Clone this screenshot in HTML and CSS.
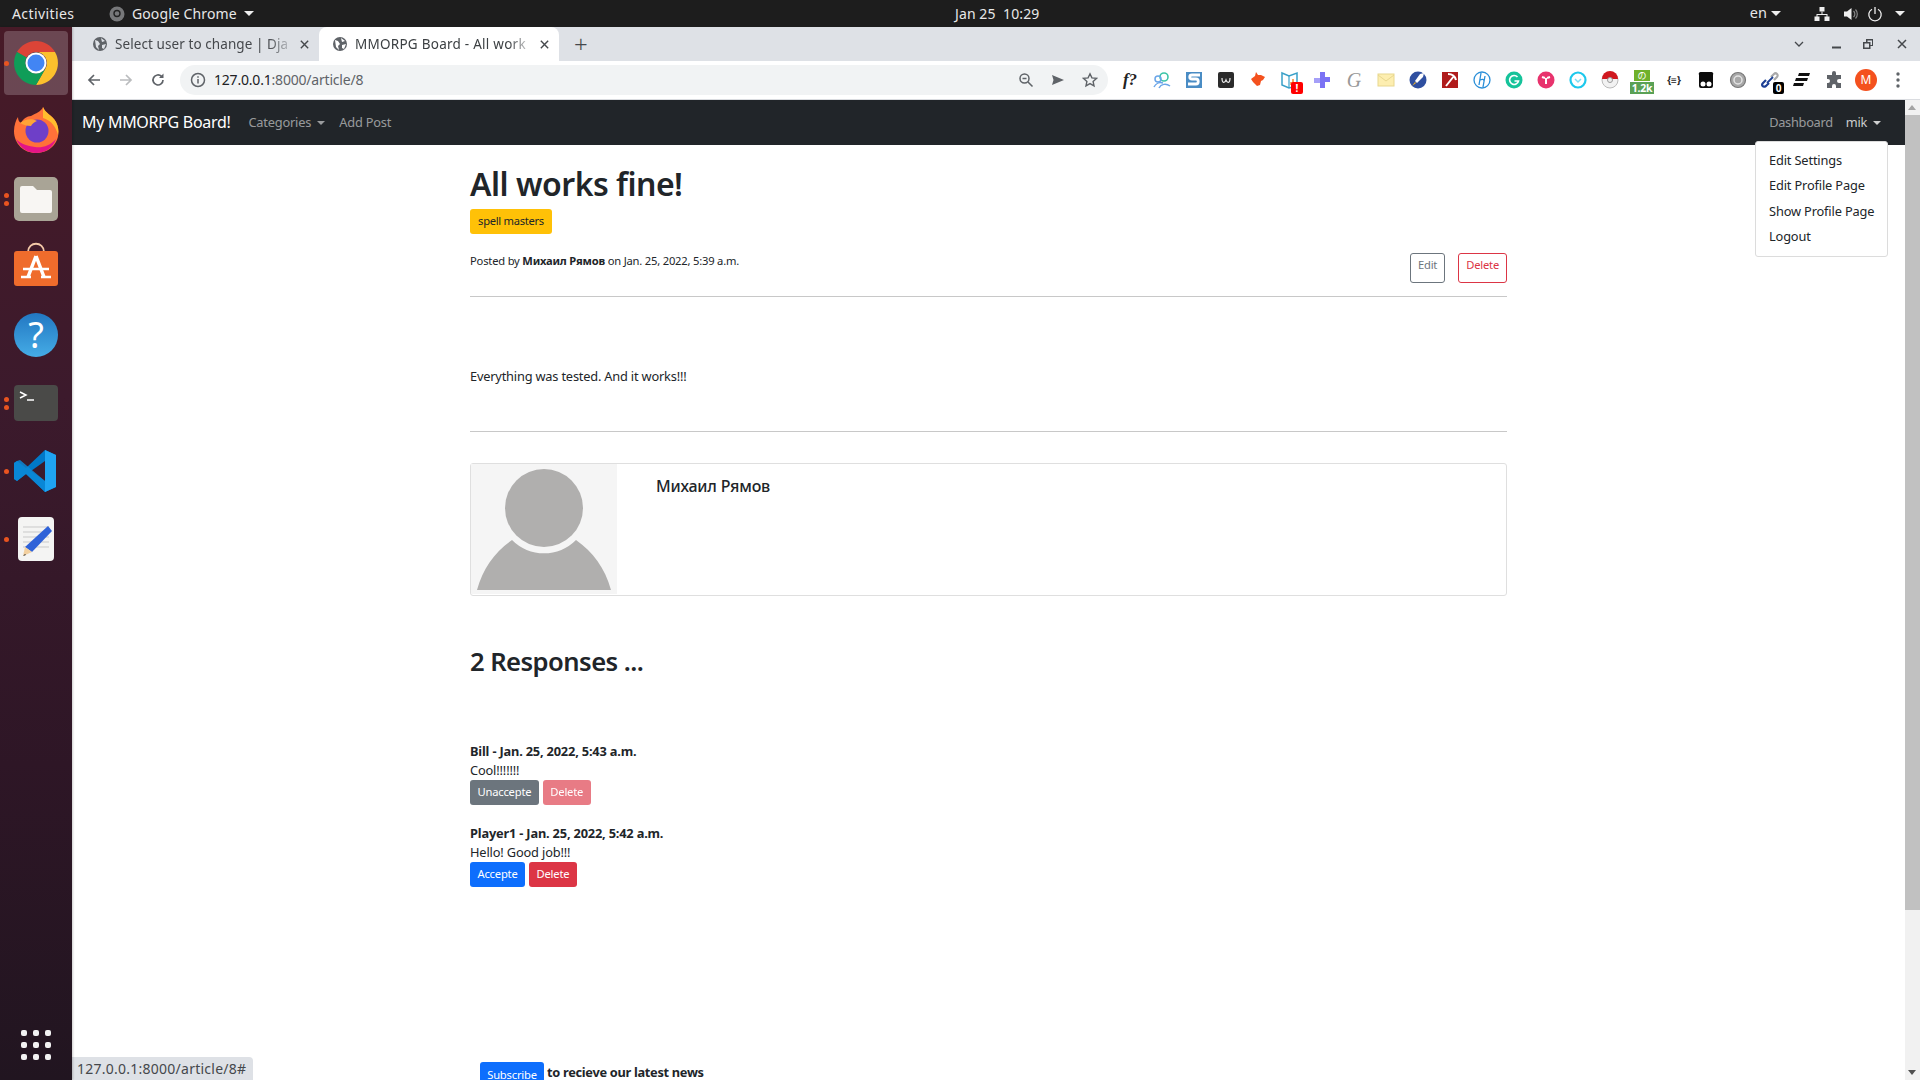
FILE: index.html
```html
<!DOCTYPE html>
<html lang="en">
<head>
  <meta charset="UTF-8">
  <meta name="viewport" content="width=device-width, initial-scale=1">
  <title>MMORPG Board - All works fine!</title>
  <link rel="stylesheet" href="styles.css">
</head>
<body>
  <header class="topbar">
    <span class="activities">Activities</span>
    <div class="app-menu">
      <svg class="app-menu-icon" viewBox="0 0 16 16"><circle cx="8" cy="8" r="7.5" fill="#77787a"/><circle cx="8" cy="7.5" r="3" fill="none" stroke="#222" stroke-width="1.4"/></svg>
      <span>Google Chrome</span>
      <i class="tri"></i>
    </div>
    <div class="clock">Jan 25&nbsp;&nbsp;10:29</div>
    <div class="tray">
      <span class="lang">en</span><i class="tri"></i>
      <svg class="tray-net" viewBox="0 0 16 16" fill="#eee"><rect x="5.5" y="1" width="5" height="4.5"/><rect x="0.5" y="10.5" width="5" height="4.5"/><rect x="10.5" y="10.5" width="5" height="4.5"/><path d="M7.5 5.5h1V8h5v3h-1V9h-9v2h-1V8h5z"/></svg>
      <svg class="tray-vol" viewBox="0 0 16 16"><path d="M1 5.5h3L8.5 2v12L4 10.5H1z" fill="#eee"/><path d="M10.5 5a4 4 0 0 1 0 6M12.5 3.5a6.5 6.5 0 0 1 0 9" fill="none" stroke="#888" stroke-width="1.2"/></svg>
      <svg class="tray-pow" viewBox="0 0 16 16" fill="none" stroke="#eee" stroke-width="1.3"><path d="M5 3.2a6.2 6.2 0 1 0 6 0M8 1v7"/></svg>
      <i class="tri"></i>
    </div>
  </header>

  <div class="desktop">
    <nav class="dock">
      <div class="dock-item active"><i class="run run-one"></i>
        <svg viewBox="0 0 48 48"><path d="M5 13a22 22 0 0 1 38 0H24a11 11 0 0 0-9.5 5.5z" fill="#db4437"/><path d="M43 13a22 22 0 0 1-19 33l9.5-16.5A11 11 0 0 0 24 13z" fill="#fbc02d"/><path d="M5 13a22 22 0 0 0 19 33l9.5-16.5a11 11 0 0 1-19-11z" fill="#0f9d58"/><circle cx="24" cy="24" r="10.5" fill="#fff"/><circle cx="24" cy="24" r="8.5" fill="#4285f4"/></svg>
      </div>
      <div class="dock-item dock-firefox">
        <svg viewBox="0 0 48 48"><path d="M31 1c2 6 9 8 13 15 4 8 3 17-2 23-5 6-12 8-18 8C12 47 2 38 2 25c0-6 2-11 4-14 0 3 1 5 3 6 2-4 6-7 10-7 5-3 10-4 12-9z" fill="#ff7139"/><path d="M4 33c4 9 12 14 20 14 9 0 17-5 20-14-6 7-14 9-21 8-8-1-14-3-19-8z" fill="#e31587"/><path d="M31 1c2 6 9 8 13 15 2 4 3 8 2 13-2-8-6-14-15-17z" fill="#ffbd2e"/><circle cx="25" cy="25" r="11.5" fill="#6e3fc8"/><path d="M8 17c5-4 12-5 17-2-3 1-5 3-6 5-4 0-8-1-11-3z" fill="#ffa436"/></svg>
      </div>
      <div class="dock-item"><i class="run run-two"></i>
        <svg viewBox="0 0 48 48"><rect x="2" y="2" width="44" height="44" rx="5" fill="#a9a496"/><path d="M8 13a2 2 0 0 1 2-2h11l4 4h13a2 2 0 0 1 2 2v19a2 2 0 0 1-2 2H10a2 2 0 0 1-2-2z" fill="#f8f6f3"/></svg>
      </div>
      <div class="dock-item dock-store">
        <svg viewBox="0 0 48 48"><path d="M16 12c0-11 16-11 16 0" fill="none" stroke="#f4c9a8" stroke-width="1.8"/><rect x="2" y="11" width="44" height="35" rx="3" fill="#ef6c2c"/><path d="M24 16L16 37M24 16l8 21" stroke="#fff" stroke-width="3.5" fill="none"/><path d="M11 29h26M9 37h10M29 37h10" stroke="#fff" stroke-width="2.5" fill="none"/></svg>
      </div>
      <div class="dock-item">
        <svg viewBox="0 0 48 48"><defs><linearGradient id="helpGrad" x1="0" y1="0" x2="0" y2="1"><stop offset="0" stop-color="#2277c2"/><stop offset="1" stop-color="#45ace6"/></linearGradient></defs><circle cx="24" cy="24" r="22" fill="url(#helpGrad)"/><text x="24" y="37" text-anchor="middle" class="help-mark">?</text></svg>
      </div>
      <div class="dock-item"><i class="run run-two"></i>
        <svg viewBox="0 0 48 48"><rect x="2" y="6" width="44" height="36" rx="4" fill="#4a4a48"/><path d="M8 13l6 3-6 3" fill="none" stroke="#fff" stroke-width="1.5"/><path d="M15 21h7" stroke="#fff" stroke-width="1.5"/></svg>
      </div>
      <div class="dock-item"><i class="run run-one"></i>
        <svg viewBox="0 0 48 48"><path d="M33 3l11 5v32l-11 5-19-18-9 7-3-2V16l3-2 9 7z" fill="#0078c8"/><path d="M33 3l11 5v32l-11 5z" fill="#1fa4f2"/><path d="M33 14L19 24l14 10z" fill="#3c1a2b"/><path d="M5 14l3-1 25 21v11L14 27l-9 7-3-2V16z" fill="#0a8ad8" opacity=".85"/></svg>
      </div>
      <div class="dock-item"><i class="run run-one"></i>
        <svg viewBox="0 0 48 48"><rect x="6" y="2" width="36" height="44" rx="4" fill="#f4f4f3"/><path d="M11 12h26M11 17h26M11 22h26M11 27h26M11 32h26" stroke="#c9c9c9"/><path d="M36 11l4 5-20 21-7-5z" fill="#2f62d8"/><path d="M13 32l7 5-9 4z" fill="#f2d0a0"/><path d="M11 41l2-2 1 1z" fill="#333"/></svg>
      </div>
      <div class="dock-apps">
        <i></i><i></i><i></i><i></i><i></i><i></i><i></i><i></i><i></i>
      </div>
    </nav>

    <div class="browser">
      <div class="tabstrip">
        <div class="tab">
          <svg class="globe" viewBox="0 0 16 16"><circle cx="8" cy="8" r="7" fill="#5f6368"/><path d="M3 4l3 1 2 3-2 2 1 4-3-3zM9 2l4 3-3 1zM10 9l4-1-2 5-2-1z" fill="#dee1e6"/></svg>
          <span class="tab-title">Select user to change | Dja</span>
          <svg class="tab-close" viewBox="0 0 12 12"><path d="M2 2l8 8M10 2l-8 8" stroke="#45484c" stroke-width="1.5"/></svg>
        </div>
        <div class="tab tab-active">
          <svg class="globe" viewBox="0 0 16 16"><circle cx="8" cy="8" r="7" fill="#5f6368"/><path d="M3 4l3 1 2 3-2 2 1 4-3-3zM9 2l4 3-3 1zM10 9l4-1-2 5-2-1z" fill="#fff"/></svg>
          <span class="tab-title">MMORPG Board - All work</span>
          <svg class="tab-close" viewBox="0 0 12 12"><path d="M2 2l8 8M10 2l-8 8" stroke="#45484c" stroke-width="1.5"/></svg>
        </div>
        <span class="tab-new">+</span>
        <div class="win-controls">
          <svg viewBox="0 0 12 12" class="win-chevron"><path d="M2 4l4 4 4-4" fill="none" stroke="#45484c" stroke-width="1.3"/></svg>
          <svg viewBox="0 0 12 12" class="win-min"><path d="M1 9.5h9" stroke="#45484c" stroke-width="2"/></svg>
          <svg viewBox="0 0 12 12" class="win-max"><path d="M4 1h7v7H8.5v3H1V4h3zM5.5 2.5V4h3v3H10V2.5zM2.5 5.5v4H7v-4z" fill="#45484c"/></svg>
          <svg viewBox="0 0 12 12" class="win-close"><path d="M2 2l8 8M10 2l-8 8" stroke="#45484c" stroke-width="1.5"/></svg>
        </div>
      </div>

      <div class="toolbar">
        <div class="tb-nav">
          <svg viewBox="0 0 16 16"><path d="M14 8H3M8 3L3 8l5 5" fill="none" stroke="#5f6368" stroke-width="1.7"/></svg>
          <svg viewBox="0 0 16 16"><path d="M2 8h11M8 3l5 5-5 5" fill="none" stroke="#babcbe" stroke-width="1.7"/></svg>
          <svg viewBox="0 0 16 16"><path d="M13 8a5 5 0 1 1-1.5-3.6" fill="none" stroke="#5f6368" stroke-width="1.7"/><path d="M13.5 1.5V6H9z" fill="#5f6368"/></svg>
        </div>
        <div class="omnibox">
          <svg class="omni-info" viewBox="0 0 16 16"><circle cx="8" cy="8" r="6.5" fill="none" stroke="#5f6368" stroke-width="1.5"/><path d="M8 7v4.5M8 4.3v1.5" stroke="#5f6368" stroke-width="1.5"/></svg>
          <span class="url"><b>127.0.0.1</b>:8000/article/8</span>
          <div class="omni-actions">
            <svg viewBox="0 0 16 16"><circle cx="6.5" cy="6.5" r="4.5" fill="none" stroke="#5f6368" stroke-width="1.5"/><path d="M10 10l4.5 4.5M4.5 6.5h4" stroke="#5f6368" stroke-width="1.5"/></svg>
            <svg viewBox="0 0 16 16"><path d="M2 3l12 5-12 5 1.5-5z" fill="#5f6368"/></svg>
            <svg viewBox="0 0 16 16"><path d="M8 1.8l1.9 4.1 4.5.5-3.3 3 .9 4.4L8 11.600l-4 2.200.9-4.400-3.300-3 4.500-.5z" fill="none" stroke="#5f6368" stroke-width="1.4"/></svg>
          </div>
        </div>
        <div class="extensions">
          <span class="ext ext-formula">f?</span>
          <span class="ext"><svg viewBox="0 0 20 20"><circle cx="12" cy="7" r="4" fill="none" stroke="#3cc4a8" stroke-width="1.6"/><circle cx="6" cy="9" r="3" fill="none" stroke="#6aa5e8" stroke-width="1.5"/><path d="M2 17c2-4 6-5 9-4M7 18c2-4 7-5 11-2" fill="none" stroke="#6aa5e8" stroke-width="1.5"/></svg></span>
          <span class="ext"><svg viewBox="0 0 20 20"><rect x="2" y="2" width="16" height="16" fill="#4a8cc4"/><path d="M16 5H8c-3 0-3 4 0 4h4c3 0 3 5 0 5H4" fill="none" stroke="#fff" stroke-width="2.8"/></svg></span>
          <span class="ext"><svg viewBox="0 0 20 20"><rect x="2" y="2" width="16" height="16" rx="2" fill="#2b2b2b"/><path d="M6 8c0 6 3 5 4 2 1 3 4 4 4-2" fill="none" stroke="#eee" stroke-width="1.2"/></svg></span>
          <span class="ext"><svg viewBox="0 0 20 20"><path d="M3 9l4-3 1-4 2 3h3l4 2-2 3-2 1-1 4-3 1-2-2-2-2z" fill="#f4511e"/></svg></span>
          <span class="ext"><svg viewBox="0 0 20 20"><path d="M2 3l7 3 8-3v13l-8 2-7-3z" fill="none" stroke="#3aa0c8" stroke-width="1.5"/><path d="M9 6v12" stroke="#3aa0c8" stroke-width="1.2"/><path d="M11 15v-3M13 15V9" stroke="#ef8a2c" stroke-width="1.5"/></svg><b class="badge-red">!</b></span>
          <span class="ext"><svg viewBox="0 0 20 20"><path d="M8 2h5v5h5v5h-5v6H8v-6H2V8h6z" fill="#7b72f4"/><rect x="2" y="8" width="6" height="5" fill="#a59ff8"/></svg></span>
          <span class="ext ext-g">G</span>
          <span class="ext"><svg viewBox="0 0 20 20"><rect x="2" y="4" width="16" height="12" fill="#fdeeb0" stroke="#e8d78e"/><path d="M2 5l8 6 8-6" fill="none" stroke="#e8d78e"/></svg></span>
          <span class="ext"><svg viewBox="0 0 20 20"><circle cx="10" cy="10" r="8.5" fill="#2f4fa0"/><path d="M7 11l5-7 4-1-1 4-6 6z" fill="#fff"/><path d="M4 16l3-4 1 1z" fill="#f5b324"/></svg></span>
          <span class="ext"><svg viewBox="0 0 20 20"><rect x="2" y="2" width="16" height="16" fill="#b01c1c"/><path d="M6 16L14 6M8 4c4 0 7 2 8 6" fill="none" stroke="#fff" stroke-width="2"/></svg></span>
          <span class="ext"><svg viewBox="0 0 20 20"><circle cx="10" cy="10" r="8" fill="#fff" stroke="#2a8fd8" stroke-width="1.3"/><path d="M9 3L7 15M13 6l-2 11M8 10c2-1 4-1 4 1" fill="none" stroke="#2a8fd8" stroke-width="1.3"/></svg></span>
          <span class="ext"><svg viewBox="0 0 20 20"><circle cx="10" cy="10" r="8.5" fill="#15c39a"/><path d="M13.5 7a4.5 4.5 0 1 0 1 4h-4" fill="none" stroke="#fff" stroke-width="1.6"/></svg></span>
          <span class="ext"><svg viewBox="0 0 20 20"><circle cx="10" cy="10" r="8.5" fill="#e8336d"/><path d="M6 7l3 1M14 7l-3 1M10 8v6" stroke="#fff" stroke-width="2"/></svg></span>
          <span class="ext"><svg viewBox="0 0 20 20"><circle cx="10" cy="10" r="7.5" fill="#fff" stroke="#1dc8ec" stroke-width="2.2"/><path d="M7 9l3 3 3-3" fill="none" stroke="#7ddcf2" stroke-width="1.5"/></svg></span>
          <span class="ext"><svg viewBox="0 0 20 20"><circle cx="10" cy="10" r="8" fill="#f2f2f2" stroke="#bbb"/><path d="M2 9a8 8 0 0 1 16 0z" fill="#d0181f"/><circle cx="10" cy="10" r="2.5" fill="#eee" stroke="#999"/></svg></span>
          <span class="ext ext-stack"><span class="stack-top">の</span><span class="stack-count">1.2k</span></span>
          <span class="ext ext-code">{≡}</span>
          <span class="ext"><svg viewBox="0 0 20 20"><path d="M3 5a2 2 0 0 1 2-3h10a2 2 0 0 1 2 3v11a2 2 0 0 1-2 2H5a2 2 0 0 1-2-2z" fill="#0b0b0b"/><circle cx="7" cy="14" r="2.5" fill="#fff"/><circle cx="13" cy="14" r="2.5" fill="#fff"/></svg></span>
          <span class="ext"><svg viewBox="0 0 20 20"><circle cx="10" cy="10" r="7.5" fill="#a8a8a8" stroke="#777" stroke-width="1.2"/><circle cx="10" cy="10" r="4" fill="none" stroke="#e4e4e4" stroke-width="1.5"/></svg></span>
          <span class="ext"><svg viewBox="0 0 20 20"><path d="M9 13l-3 3c-3 2-5-1-3-3l3-3" fill="none" stroke="#1c3f94" stroke-width="2.2"/><path d="M11 7l3-3c2-2 5 1 3 3l-3 3" fill="none" stroke="#a9a9a9" stroke-width="2.2"/><path d="M7 13l6-6" stroke="#1c3f94" stroke-width="1.8"/></svg><b class="badge-zero">0</b></span>
          <span class="ext"><svg viewBox="0 0 20 20"><path d="M7 3h11l-1 3H6zM4 8h12l-1 3H3zM2 13h10l-1 3H1z" fill="#111"/></svg></span>
          <span class="ext"><svg viewBox="0 0 20 20"><path d="M8 3a2 2 0 0 1 4 0v2h5v4h-2a2 2 0 0 0 0 4h2v5h-5v-2a2 2 0 0 0-4 0v2H3v-5h1a2 2 0 0 0 0-4H3V5h5z" fill="#5f6368"/></svg></span>
          <span class="avatar">M</span>
          <span class="ext"><svg viewBox="0 0 20 20" fill="#5f6368"><circle cx="10" cy="4" r="1.7"/><circle cx="10" cy="10" r="1.7"/><circle cx="10" cy="16" r="1.7"/></svg></span>
        </div>
      </div>

      <div class="viewport">
        <div class="page">
          <nav class="navbar">
            <a class="brand" href="#">My MMORPG Board!</a>
            <a class="nav-link" href="#">Categories <i class="caret"></i></a>
            <a class="nav-link" href="#">Add Post</a>
            <div class="nav-right">
              <a class="nav-link" href="#">Dashboard</a>
              <a class="nav-link nav-user" href="#">mik <i class="caret"></i></a>
            </div>
          </nav>

          <main class="article">
            <h1>All works fine!</h1>
            <span class="category">spell masters</span>
            <div class="meta">
              <small>Posted by <b>Михаил Рямов</b> on Jan. 25, 2022, 5:39 a.m.</small>
              <div class="meta-actions">
                <a class="btn-outline btn-outline-gray" href="#">Edit</a>
                <a class="btn-outline btn-outline-red" href="#">Delete</a>
              </div>
            </div>
            <hr class="rule rule-top">
            <p class="post-body">Everything was tested. And it works!!!</p>
            <hr class="rule rule-bottom">

            <section class="author-card">
              <svg class="author-photo" viewBox="0 0 146 130"><rect width="146" height="130" fill="#f5f5f5"/><circle cx="73" cy="44" r="39" fill="#b0afae"/><path d="M6 126C12 104 24 88 41 76A45 45 0 0 0 105 76C122 88 134 104 140 126Z" fill="#b0afae"/></svg>
              <h5>Михаил Рямов</h5>
            </section>

            <h2>2 Responses ...</h2>

            <div class="comment">
              <strong>Bill - Jan. 25, 2022, 5:43 a.m.</strong>
              <p>Cool!!!!!!!</p>
              <div class="comment-actions">
                <a class="btn btn-gray" href="#">Unaccepte</a>
                <a class="btn btn-red btn-faded" href="#">Delete</a>
              </div>
            </div>
            <div class="comment">
              <strong>Player1 - Jan. 25, 2022, 5:42 a.m.</strong>
              <p>Hello! Good job!!!</p>
              <div class="comment-actions">
                <a class="btn btn-blue" href="#">Accepte</a>
                <a class="btn btn-red" href="#">Delete</a>
              </div>
            </div>

            <footer class="subscribe">
              <a class="btn btn-blue" href="#">Subscribe</a>
              <b>to recieve our latest news</b>
            </footer>
          </main>
        </div>

        <div class="scrollbar">
          <i class="scroll-up"></i>
          <div class="scroll-track"><div class="scroll-thumb"></div></div>
          <i class="scroll-down"></i>
        </div>

        <ul class="dropdown">
          <li>Edit Settings</li>
          <li>Edit Profile Page</li>
          <li>Show Profile Page</li>
          <li>Logout</li>
        </ul>
        <div class="status-bubble">127.0.0.1:8000/article/8#</div>
      </div>
    </div>
  </div>
</body>
</html>
```

FILE: styles.css
```css
* {
  box-sizing: border-box;
}

html, body {
  height: 100%;
}

body {
  margin: 0;
  height: 100vh;
  overflow: hidden;
  display: flex;
  flex-direction: column;
  font-family: "Noto Sans", "Open Sans", sans-serif;
  color: #212529;
  background: #fff;
}

a {
  text-decoration: none;
}

.tri {
  display: inline-block;
  width: 0;
  height: 0;
  border-left: 5px solid transparent;
  border-right: 5px solid transparent;
  border-top: 5px solid #eee;
}

/* gnome top bar */
.topbar {
  height: 27px;
  flex: none;
  background: #1d1d1d;
  color: #e8e8e8;
  font-size: 14px;
  letter-spacing: 0.1px;
  display: flex;
  align-items: center;
  position: relative;
  padding-left: 12px;
}

.activities {
  width: 97px;
  letter-spacing: 0.4px;
}

.app-menu {
  display: flex;
  align-items: center;
  gap: 7px;
}

.app-menu-icon {
  width: 16px;
  height: 16px;
}

.clock {
  position: absolute;
  left: 955px;
  top: 4px;
}

.tray {
  margin-left: auto;
  display: flex;
  align-items: center;
  padding-right: 15px;
}

.lang {
  margin-right: 4px;
  font-size: 14.5px;
  line-height: 19px;
  margin-top: -2px;
}

.tray-net, .tray-vol, .tray-pow {
  width: 16px;
  height: 16px;
}

.tray-net {
  margin-left: 33px;
}

.tray-vol {
  margin-left: 13px;
}

.tray-pow {
  margin-left: 8px;
  margin-right: 12px;
}

.desktop {
  flex: 1;
  display: flex;
  min-height: 0;
}

/* ubuntu dock */
.dock {
  width: 72px;
  flex: none;
  background: linear-gradient(180deg, #471a27 0%, #3c1a2c 35%, #2e1626 70%, #211520 100%);
  position: relative;
  padding-top: 2px;
  box-shadow: 1px 0 2px rgba(0, 0, 0, 0.2);
  z-index: 2;
}

.dock-item {
  height: 68px;
  width: 72px;
  display: flex;
  align-items: center;
  justify-content: center;
  position: relative;
}

.dock-item svg {
  width: 48px;
  height: 48px;
  position: relative;
}

.dock-firefox svg {
  margin-top: -2px;
}

.dock-store svg {
  margin-top: -6px;
}

.dock-item.active::before {
  content: "";
  position: absolute;
  left: 4px;
  top: 2px;
  width: 64px;
  height: 64px;
  border-radius: 4px;
  background: rgba(255, 255, 255, 0.2);
}

.run {
  position: absolute;
  left: 4px;
  width: 5px;
  height: 5px;
  border-radius: 50%;
  background: #e95420;
  z-index: 1;
}

.run-one {
  top: 32px;
}

.run-two {
  top: 28px;
  box-shadow: 0 8px 0 #e95420;
}

.dock-apps {
  position: absolute;
  left: 21px;
  bottom: 20px;
  display: grid;
  grid-template-columns: repeat(3, 6px);
  grid-auto-rows: 6px;
  gap: 6px;
}

.dock-apps i {
  background: #f2f2f2;
  border-radius: 2px;
}

/* chrome */
.browser {
  flex: 1;
  min-width: 0;
  display: flex;
  flex-direction: column;
}

.tabstrip {
  height: 34px;
  flex: none;
  background: #dee1e6;
  display: flex;
  align-items: flex-end;
  padding-left: 9px;
  position: relative;
}

.tab {
  width: 238px;
  height: 34px;
  display: flex;
  align-items: center;
  padding: 0 8px 0 11px;
  font-size: 13.5px;
  color: #45484c;
  letter-spacing: 0.08px;
}

.tab-active {
  width: 240px;
  padding-left: 12px;
  background: #fff;
  border-radius: 8px 8px 0 0;
  color: #3c4043;
  letter-spacing: 0.25px;
}

.globe {
  width: 16px;
  height: 16px;
  flex: none;
  margin-right: 7px;
}

.tab-active .globe {
  margin-left: 1px;
}

.tab-title {
  flex: 1;
  overflow: hidden;
  white-space: nowrap;
  -webkit-mask-image: linear-gradient(90deg, #000 85%, transparent 100%);
  mask-image: linear-gradient(90deg, #000 85%, transparent 100%);
}

.tab-close {
  width: 11px;
  height: 11px;
  flex: none;
  margin: 0 1px 0 4px;
}

.tab-new {
  font-size: 24px;
  font-weight: 300;
  line-height: 34px;
  margin-left: 15px;
  color: #45484c;
}

.win-controls {
  position: absolute;
  left: 1720px;
  top: 11px;
  display: flex;
  align-items: center;
}

.win-controls svg {
  width: 12px;
  height: 12px;
}

.win-chevron {
  margin-left: 1px;
}

.win-min {
  margin-left: 26px;
}

.win-max {
  margin-left: 19px;
}

.win-close {
  margin-left: 22px;
}

.toolbar {
  height: 39px;
  flex: none;
  background: #fff;
  border-bottom: 1px solid #dadce0;
  display: flex;
  align-items: center;
}

.tb-nav {
  width: 108px;
  padding-left: 14px;
  display: flex;
  gap: 16px;
}

.tb-nav svg {
  width: 16px;
  height: 16px;
}

.omnibox {
  width: 928px;
  height: 30px;
  border-radius: 15px;
  background: #f1f3f4;
  display: flex;
  align-items: center;
  padding-left: 10px;
  font-size: 14px;
  letter-spacing: -0.2px;
  color: #5f6368;
}

.omni-info {
  width: 16px;
  height: 16px;
  margin-right: 8px;
}

.url {
  margin-top: -1px;
}

.url b {
  font-weight: 400;
  color: #202124;
}

.omni-actions {
  margin-left: auto;
  padding-right: 10px;
  display: flex;
  gap: 16px;
}

.omni-actions svg {
  width: 16px;
  height: 16px;
}

.extensions {
  display: flex;
  align-items: center;
  margin-left: 6px;
}

.ext {
  width: 32px;
  height: 30px;
  flex: none;
  display: flex;
  align-items: center;
  justify-content: center;
  position: relative;
}

.ext svg {
  width: 20px;
  height: 20px;
}

.ext-formula {
  font-family: "Liberation Serif", serif;
  font-style: italic;
  font-weight: 700;
  font-size: 17px;
  color: #222;
}

.ext-g {
  font-family: "Liberation Serif", serif;
  font-style: italic;
  font-size: 20px;
  color: #999;
}

.ext-code {
  font-size: 10px;
  font-weight: 700;
  color: #222;
}

.ext-stack {
  flex-direction: column;
  line-height: 1;
}

.stack-top {
  width: 16px;
  height: 11px;
  margin-top: 3px;
  background: #6fb12b;
  color: #fff;
  font-family: "Noto Sans CJK JP", sans-serif;
  font-size: 9px;
  line-height: 11px;
  text-align: center;
}

.stack-count {
  width: 24px;
  height: 12px;
  margin-top: 1px;
  background: #5aa155;
  color: #fff;
  font-size: 10.5px;
  font-weight: 700;
  letter-spacing: -0.2px;
  line-height: 12px;
  text-align: center;
}

.badge-red {
  position: absolute;
  right: 3px;
  bottom: 1px;
  width: 12px;
  height: 12px;
  background: #f00;
  border-radius: 2px;
  color: #fff;
  font-size: 10px;
  line-height: 12px;
  text-align: center;
}

.badge-zero {
  position: absolute;
  right: 2px;
  bottom: 1px;
  width: 11px;
  height: 12px;
  background: #000;
  border-radius: 2px;
  color: #fff;
  font-size: 10px;
  line-height: 12px;
  text-align: center;
}

.avatar {
  width: 22px;
  height: 22px;
  margin: 0 5px;
  flex: none;
  border-radius: 50%;
  background: #f4511e;
  color: #fff;
  font-size: 12px;
  line-height: 22px;
  text-align: center;
}

.viewport {
  flex: 1;
  min-height: 0;
  display: flex;
  position: relative;
}

.page {
  flex: 1;
  min-width: 0;
  overflow: hidden;
  font-size: 12.8px;
}

/* site navbar */
.navbar {
  height: 45px;
  background: #212529;
  display: flex;
  align-items: center;
  padding: 0 24px 2px 10px;
}

.brand {
  color: #fff;
  font-size: 16px;
  margin-right: 18px;
  letter-spacing: -0.3px;
}

.nav-link {
  color: rgba(255, 255, 255, 0.55);
  margin-right: 14px;
  letter-spacing: -0.2px;
}

.nav-right {
  margin-left: auto;
  display: flex;
}

.nav-right .nav-link {
  margin-right: 0;
  letter-spacing: -0.3px;
}

.nav-user {
  margin-left: 13px;
  color: rgba(255, 255, 255, 0.78);
}

.caret {
  display: inline-block;
  vertical-align: 2px;
  margin-left: 3px;
  border-left: 4.5px solid transparent;
  border-right: 4.5px solid transparent;
  border-top: 4.5px solid currentColor;
}

/* article */
.article {
  width: 1037px;
  margin: 0 auto;
}

h1 {
  margin: 20px 0 0;
  font-size: 32px;
  line-height: 38px;
  font-weight: 600;
  letter-spacing: -0.5px;
}

.category {
  display: block;
  width: 82px;
  height: 25px;
  margin-top: 6px;
  background: #ffc107;
  border-radius: 3px;
  font-size: 11.2px;
  line-height: 24px;
  text-align: center;
  letter-spacing: -0.3px;
}

.meta {
  margin-top: 19px;
  display: flex;
  justify-content: space-between;
  align-items: flex-start;
}

.meta small {
  font-size: 11.2px;
  line-height: 16px;
  letter-spacing: -0.2px;
}

.meta-actions {
  display: flex;
  gap: 13px;
}

.btn-outline {
  height: 30px;
  padding: 0 7px;
  border-radius: 3px;
  font-size: 11.2px;
  line-height: 22px;
  letter-spacing: -0.2px;
  border: 1px solid;
}

.btn-outline-gray {
  color: #6c757d;
  border-color: #6c757d;
}

.btn-outline-red {
  color: #dc3545;
  border-color: #dc3545;
}

.rule {
  border: 0;
  height: 1px;
  background: #c8c8c8;
  margin: 0;
}

.rule-top {
  margin-top: 13px;
}

.post-body {
  margin: 69px 0 0;
  line-height: 20px;
  letter-spacing: -0.19px;
}

.rule-bottom {
  margin-top: 45px;
}

.author-card {
  margin-top: 31px;
  height: 133px;
  border: 1px solid #dfdfdf;
  border-radius: 3px;
  display: flex;
  align-items: flex-start;
}

.author-photo {
  width: 146px;
  height: 130px;
  flex: none;
}

h5 {
  margin: 12px 0 0 39px;
  font-size: 16px;
  line-height: 20px;
  font-weight: 500;
  letter-spacing: -0.2px;
}

h2 {
  margin: 50px 0 0;
  font-size: 25.6px;
  line-height: 31px;
  font-weight: 600;
  letter-spacing: -0.55px;
}

.comment {
  margin-bottom: 18px;
}

h2 + .comment {
  margin-top: 64px;
}

.comment strong {
  display: block;
  line-height: 20px;
  letter-spacing: -0.18px;
}

.comment p {
  margin: 0;
  line-height: 19px;
  letter-spacing: -0.15px;
}

.comment-actions {
  display: flex;
  gap: 4px;
}

.btn {
  display: inline-block;
  height: 25px;
  padding: 0 7.5px;
  border-radius: 3px;
  color: #fff;
  font-size: 11.2px;
  line-height: 24px;
  letter-spacing: -0.2px;
}

.btn-gray {
  background: #6c757d;
}

.btn-red {
  background: #dc3545;
}

.btn-faded {
  opacity: 0.65;
}

.btn-blue {
  background: #0d6efd;
}

.subscribe {
  margin-top: 174px;
  margin-left: 10px;
  display: flex;
  gap: 3px;
  align-items: flex-start;
  letter-spacing: -0.3px;
}

.subscribe .btn {
  width: 64px;
  height: 20px;
  margin-top: 1px;
  padding: 4px 0 0;
  text-align: center;
  line-height: 17px;
}

.subscribe b {
  margin-top: 2px;
}

/* chrome scrollbar */
.scrollbar {
  width: 15px;
  flex: none;
  background: #f1f1f1;
  display: flex;
  flex-direction: column;
}

.scroll-up, .scroll-down {
  height: 15px;
  flex: none;
  position: relative;
}

.scroll-up::after, .scroll-down::after {
  content: "";
  position: absolute;
  left: 3px;
  top: 5px;
  border-left: 4px solid transparent;
  border-right: 4px solid transparent;
}

.scroll-up::after {
  border-bottom: 5px solid #a3a3a3;
}

.scroll-down::after {
  border-top: 5px solid #505050;
}

.scroll-track {
  flex: 1;
}

.scroll-thumb {
  height: 795px;
  background: #c1c1c1;
}

.dropdown {
  position: absolute;
  left: 1683px;
  top: 41px;
  width: 133px;
  height: 116px;
  margin: 0;
  padding: 6px 0 0 13px;
  list-style: none;
  background: #fff;
  border: 1px solid #dcdcdc;
  border-radius: 3px;
  font-size: 12.8px;
  letter-spacing: -0.15px;
}

.dropdown li {
  height: 25.3px;
  line-height: 25.3px;
  white-space: nowrap;
}

.status-bubble {
  position: absolute;
  left: 0;
  bottom: 0;
  width: 181px;
  height: 23px;
  padding-left: 5px;
  background: #dee1e6;
  border-top-right-radius: 4px;
  color: #45484c;
  font-size: 14px;
  line-height: 24px;
  letter-spacing: 0.25px;
  white-space: nowrap;
}

.help-mark {
  font-family: "Noto Sans", sans-serif;
  font-size: 36px;
  fill: #fff;
}
```
